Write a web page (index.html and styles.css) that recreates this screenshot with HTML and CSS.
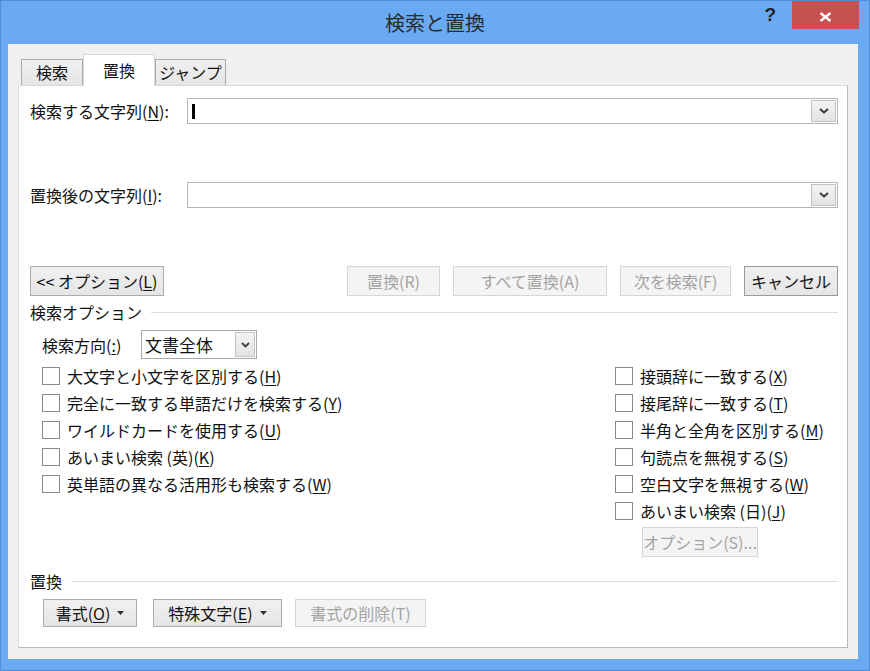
FILE: index.html
```html
<!DOCTYPE html>
<html lang="ja">
<head>
    <meta charset="utf-8">
    <title>検索と置換</title>
    <link rel="stylesheet" href="styles.css">
</head>
<body>
<div class="window">
    <div class="titlebar">
        <div></div>
        <div class="title">検索と置換</div>
        <div class="controls">
            <span class="help">?</span>
            <span class="close">
                <svg width="13" height="10" viewBox="0 0 13 10"><path d="M1.5 1l10 8M11.5 1l-10 8" stroke="#fff" stroke-width="2.4" fill="none"/></svg>
            </span>
        </div>
    </div>

    <div class="client">
        <div class="tabs">
            <div class="tab">検索</div>
            <div class="tab active">置換</div>
            <div class="tab">ジャンプ</div>
        </div>

        <div class="panel">
            <div class="field-row find-row">
                <span class="field-label">検索する文字列(<u>N</u>):</span>
                <div class="combo">
                    <div class="combo-text"><span class="caret"></span></div>
                    <span class="drop-btn"><svg width="10" height="6" viewBox="0 0 10 6"><path d="M1 1l4 3.5 4-3.5" stroke="#3a3a3a" stroke-width="2" fill="none"/></svg></span>
                </div>
            </div>

            <div class="field-row replace-row">
                <span class="field-label">置換後の文字列(<u>I</u>):</span>
                <div class="combo">
                    <div class="combo-text"></div>
                    <span class="drop-btn"><svg width="10" height="6" viewBox="0 0 10 6"><path d="M1 1l4 3.5 4-3.5" stroke="#3a3a3a" stroke-width="2" fill="none"/></svg></span>
                </div>
            </div>

            <div class="button-row">
                <button class="btn btn-less"><span>&lt;&lt; オプション(<u>L</u>)</span></button>
                <div class="action-buttons">
                    <button class="btn disabled w-replace">置換(R)</button>
                    <button class="btn disabled w-all">すべて置換(A)</button>
                    <button class="btn disabled w-next">次を検索(F)</button>
                    <button class="btn w-cancel">キャンセル</button>
                </div>
            </div>

            <div class="group-heading">検索オプション</div>

            <div class="direction-row">
                <span class="direction-label">検索方向(<u>:</u>)</span>
                <div class="select">
                    <span class="select-text">文書全体</span>
                    <span class="select-btn"><svg width="9" height="6" viewBox="0 0 9 6"><path d="M1 1l3.5 3.5 3.5-3.5" stroke="#3a3a3a" stroke-width="1.8" fill="none"/></svg></span>
                </div>
            </div>

            <div class="option-cols">
                <div class="option-list">
                    <div class="check-row"><span class="box"></span><span>大文字と小文字を区別する(<u>H</u>)</span></div>
                    <div class="check-row"><span class="box"></span><span>完全に一致する単語だけを検索する(<u>Y</u>)</span></div>
                    <div class="check-row"><span class="box"></span><span>ワイルドカードを使用する(<u>U</u>)</span></div>
                    <div class="check-row"><span class="box"></span><span>あいまい検索 (英)(<u>K</u>)</span></div>
                    <div class="check-row"><span class="box"></span><span>英単語の異なる活用形も検索する(<u>W</u>)</span></div>
                </div>
                <div class="option-list">
                    <div class="check-row"><span class="box"></span><span>接頭辞に一致する(<u>X</u>)</span></div>
                    <div class="check-row"><span class="box"></span><span>接尾辞に一致する(<u>T</u>)</span></div>
                    <div class="check-row"><span class="box"></span><span>半角と全角を区別する(<u>M</u>)</span></div>
                    <div class="check-row"><span class="box"></span><span>句読点を無視する(<u>S</u>)</span></div>
                    <div class="check-row"><span class="box"></span><span>空白文字を無視する(<u>W</u>)</span></div>
                    <div class="check-row"><span class="box"></span><span>あいまい検索 (日)(<u>J</u>)</span></div>
                    <button class="btn disabled btn-jp-options">オプション(S)...</button>
                </div>
            </div>

            <div class="group-heading replace-heading">置換</div>

            <div class="bottom-buttons">
                <button class="btn btn-format"><span>書式(<u>O</u>)</span><svg class="tri" width="7" height="4" viewBox="0 0 7 4"><path d="M0 0h7L3.5 4z" fill="#333"/></svg></button>
                <button class="btn btn-special"><span>特殊文字(<u>E</u>)</span><svg class="tri" width="7" height="4" viewBox="0 0 7 4"><path d="M0 0h7L3.5 4z" fill="#333"/></svg></button>
                <button class="btn disabled btn-clear">書式の削除(T)</button>
            </div>
        </div>
    </div>
</div>
</body>
</html>
```

FILE: styles.css
```css
* {
    box-sizing: border-box;
}
body {
    margin: 0;
    font-family: "Noto Sans CJK JP", "Noto Sans", sans-serif;
    font-size: 16px;
    color: #111;
    background: #6aaaf2;
}
u {
    text-underline-offset: 2px;
}
.window {
    width: 870px;
    height: 671px;
    display: flex;
    flex-direction: column;
    background: #6aaaf2;
    border: 1px solid #4f8fd9;
}

/* title bar */
.titlebar {
    height: 43px;
    display: grid;
    grid-template-columns: 1fr auto 1fr;
}
.title {
    font-size: 20px;
    line-height: 24px;
    padding-top: 10px;
    color: #2b2b2b;
}
.controls {
    justify-self: end;
    display: flex;
    align-items: flex-start;
    margin-right: 10px;
}
.help {
    font-family: "Liberation Sans", sans-serif;
    font-weight: bold;
    font-size: 19px;
    line-height: 22px;
    color: #222;
    margin-top: 3px;
    margin-right: 16px;
}
.close {
    width: 67px;
    height: 28px;
    background: #c75050;
    display: flex;
    align-items: center;
    justify-content: center;
    padding-top: 3px;
}

/* client area */
.client {
    flex: 1;
    margin: 0 11px 11px 7px;
    background: #f0f0f0;
    padding: 10px 10px 11px 10px;
    display: flex;
    flex-direction: column;
}
.tabs {
    display: flex;
    align-items: flex-end;
    height: 32px;
    padding-left: 3px;
    margin-bottom: -1px;
    position: relative;
    z-index: 1;
}
.tab {
    height: 26px;
    margin-bottom: 1px;
    border: 1px solid #acacac;
    border-bottom: none;
    background: linear-gradient(#f0f0f0, #e5e5e5);
    text-align: center;
    line-height: 24px;
    width: 62px;
}
.tab.active {
    width: 72px;
    height: 32px;
    margin-bottom: 0;
    background: #fff;
    border-color: #d9d9d9;
    line-height: 30px;
}
.tab:last-child {
    width: 71px;
}
.panel {
    flex: 1;
    background: #fff;
    border: 1px solid;
    border-color: #d9d9d9 #b9b9b9 #b9b9b9 #d9d9d9;
    padding: 0 9px 0 11px;
    display: flex;
    flex-direction: column;
}

/* text fields */
.field-row {
    display: flex;
    align-items: center;
    height: 26px;
}
.find-row {
    margin-top: 12px;
}
.replace-row {
    margin-top: 58px;
}
.field-label {
    width: 157px;
    flex: none;
}
.combo {
    flex: 1;
    height: 26px;
    border: 1px solid #b4b6bb;
    display: flex;
    background: #fff;
}
.combo-text {
    flex: 1;
    display: flex;
    align-items: center;
    padding-left: 4px;
}
.caret {
    width: 3px;
    height: 15px;
    background: #000;
}
.drop-btn {
    width: 25px;
    margin: 1px;
    border: 1px solid #c3c3c3;
    background: linear-gradient(#f3f3f3, #e3e3e3);
    display: flex;
    align-items: center;
    justify-content: center;
}

/* buttons */
.btn {
    height: 30px;
    padding: 0;
    border: 1px solid #acacac;
    background: linear-gradient(#f0f0f0, #e5e5e5);
    font-family: inherit;
    font-size: 16px;
    color: #111;
    display: inline-flex;
    align-items: center;
    justify-content: center;
}
.btn.disabled {
    color: #a3a3a3;
    border-color: #d5d5d5;
    background: #f4f4f4;
}
.button-row {
    margin-top: 58px;
    display: flex;
    height: 30px;
}
.btn-less {
    width: 134px;
}
.action-buttons {
    margin-left: auto;
    display: flex;
    gap: 13px;
}
.w-replace { width: 93px; }
.w-all { width: 154px; }
.w-next { width: 111px; }
.w-cancel { width: 94px; border-color: #9a9a9a; }

/* group headings */
.group-heading {
    margin-top: 6px;
    height: 20px;
    line-height: 20px;
    display: flex;
    align-items: center;
    gap: 9px;
}
.group-heading::after {
    content: "";
    flex: 1;
    height: 1px;
    background: #dcdcdc;
}
.replace-heading {
    margin-top: 14px;
}

/* search direction */
.direction-row {
    margin-top: 8px;
    padding-left: 12px;
    display: flex;
    align-items: center;
    height: 29px;
}
.direction-label {
    width: 99px;
}
.select {
    width: 116px;
    height: 29px;
    border: 1px solid #a9a9a9;
    display: flex;
}
.select-text {
    flex: 1;
    font-size: 17px;
    line-height: 27px;
    padding-left: 3px;
}
.select-btn {
    width: 20px;
    margin: 1px;
    border: 1px solid #c3c3c3;
    background: linear-gradient(#f3f3f3, #e3e3e3);
    display: flex;
    align-items: center;
    justify-content: center;
}

/* checkboxes */
.option-cols {
    margin-top: 3px;
    padding-left: 12px;
    display: grid;
    grid-template-columns: 573px 1fr;
}
.check-row {
    height: 27px;
    display: flex;
    align-items: center;
    gap: 7px;
    white-space: nowrap;
}
.box {
    width: 18px;
    height: 18px;
    border: 1px solid #8a8a8a;
    background: #fff;
    flex: none;
}
.btn-jp-options {
    margin-top: 3px;
    margin-left: 27px;
    width: 116px;
}

/* bottom buttons */
.bottom-buttons {
    margin-top: 8px;
    padding-left: 13px;
    display: flex;
}
.bottom-buttons .btn {
    height: 28px;
}
.btn-format {
    width: 94px;
}
.btn-special {
    width: 129px;
    margin-left: 16px;
}
.btn-clear {
    width: 131px;
    margin-left: 13px;
}
.tri {
    margin-left: 7px;
}
```
